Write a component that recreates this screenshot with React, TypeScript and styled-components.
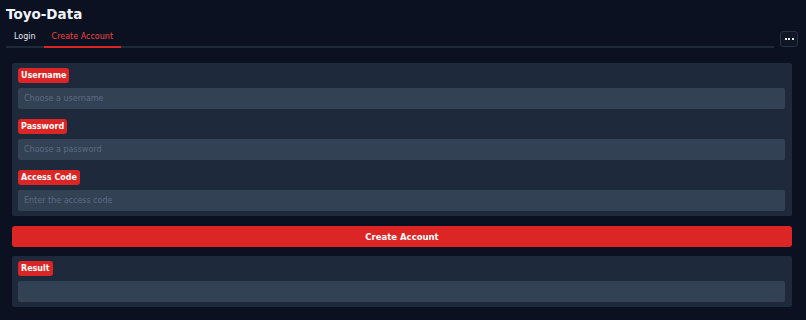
import React, { useState } from "react";
import styled, { createGlobalStyle } from "styled-components";

const GlobalStyle = createGlobalStyle`
  html, body {
    margin: 0;
    padding: 0;
    background: #0b1120;
    font-family: "DejaVu Sans", "Noto Sans", sans-serif;
  }
`;

const Page = styled.div`
  padding: 4px 6px 0 6px;
  color: #f1f5f9;
`;

const Title = styled.h1`
  margin: 0;
  font-size: 13.5px;
  font-weight: 700;
  line-height: 20px;
`;

const TabRow = styled.div`
  display: flex;
  align-items: flex-end;
  gap: 6px;
  margin-top: 7px;
`;

const TabList = styled.div`
  flex: 1;
  display: flex;
  border-bottom: 2px solid #1f2937;
`;

const Tab = styled.button<{ $active?: boolean }>`
  background: none;
  border: none;
  margin: 0 0 -2px 0;
  padding: 0 8px 3px 8px;
  font-family: inherit;
  font-size: 8px;
  line-height: 12px;
  color: ${(p) => (p.$active ? "#ef4444" : "#e2e8f0")};
  border-bottom: 2px solid ${(p) => (p.$active ? "#dc2626" : "transparent")};
  cursor: pointer;
`;

const MenuButton = styled.button`
  width: 18px;
  height: 16px;
  margin: 0 2px 1px 0;
  padding: 0;
  display: flex;
  align-items: center;
  justify-content: center;
  gap: 1.5px;
  background: #0f1626;
  border: 1px solid #273244;
  border-radius: 3px;
  cursor: pointer;
`;

const Dot = styled.span`
  width: 2px;
  height: 2px;
  background: #e5e7eb;
`;

const Panel = styled.div`
  margin: 0 14px 0 12px;
  background: #1e293b;
  border-radius: 2px;
  padding: 5px 7px 5px 6px;
  display: flex;
  flex-direction: column;
`;

const Field = styled.div`
  display: flex;
  flex-direction: column;
  gap: 5px;
  & + & {
    margin-top: 10px;
  }
`;

const Badge = styled.span`
  align-self: flex-start;
  background: #dc2626;
  color: #fff;
  font-size: 8px;
  font-weight: 700;
  line-height: 15px;
  padding: 0 3px;
  border-radius: 3px;
`;

const Input = styled.input`
  height: 21px;
  box-sizing: border-box;
  background: #334155;
  border: none;
  border-radius: 2px;
  padding: 0 6px;
  font-family: inherit;
  font-size: 8px;
  color: #e2e8f0;
  outline: none;
  &::placeholder {
    color: #5b6b82;
  }
`;

const Submit = styled.button`
  display: block;
  width: calc(100% - 26px);
  margin: 10px 14px 9px 12px;
  height: 21px;
  background: #dc2626;
  color: #fff;
  border: none;
  border-radius: 3px;
  font-family: inherit;
  font-size: 8.5px;
  font-weight: 700;
  cursor: pointer;
`;

const Spacer = styled.div`
  height: 15px;
`;

export default function App() {
  const [tab, setTab] = useState("create");
  return (
    <>
      <GlobalStyle />
      <Page>
        <Title>Toyo-Data</Title>
        <TabRow>
          <TabList>
            <Tab $active={tab === "login"} onClick={() => setTab("login")}>
              Login
            </Tab>
            <Tab $active={tab === "create"} onClick={() => setTab("create")}>
              Create Account
            </Tab>
          </TabList>
          <MenuButton aria-label="menu">
            <Dot />
            <Dot />
            <Dot />
          </MenuButton>
        </TabRow>
      </Page>
      <Spacer />
      <Panel>
        <Field>
          <Badge>Username</Badge>
          <Input placeholder="Choose a username" />
        </Field>
        <Field>
          <Badge>Password</Badge>
          <Input type="password" placeholder="Choose a password" />
        </Field>
        <Field>
          <Badge>Access Code</Badge>
          <Input placeholder="Enter the access code" />
        </Field>
      </Panel>
      <Submit>Create Account</Submit>
      <Panel>
        <Field>
          <Badge>Result</Badge>
          <Input readOnly />
        </Field>
      </Panel>
    </>
  );
}
